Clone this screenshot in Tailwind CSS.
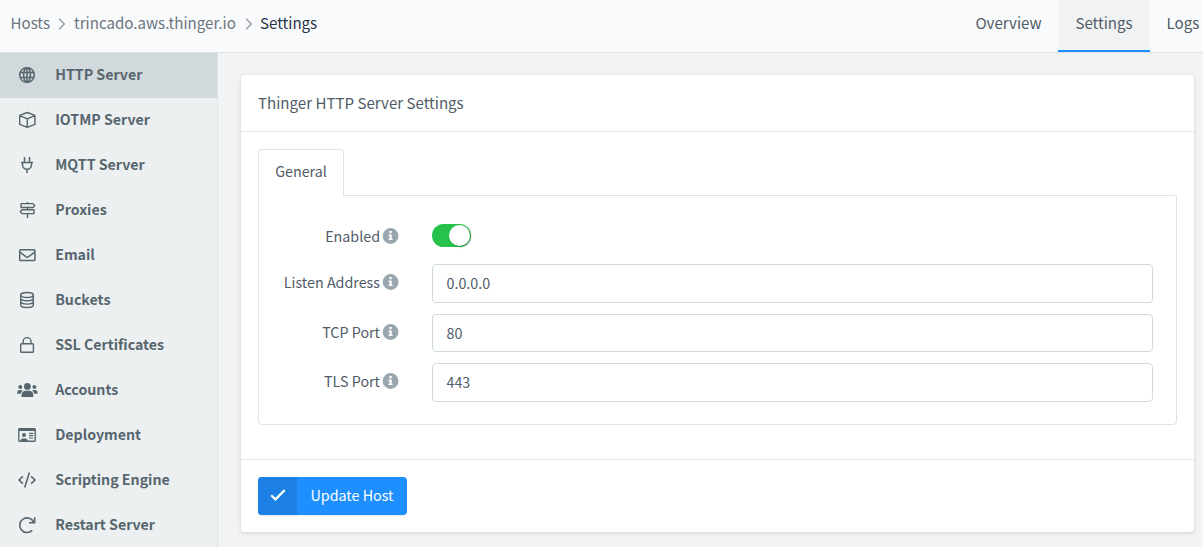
<!DOCTYPE html>
<html lang="en">
<head>
<meta charset="utf-8">
<title>Host Settings</title>
<script src="https://cdn.jsdelivr.net/npm/@tailwindcss/browser@4"></script>
</head>
<body class="flex h-[547px] w-[1203px] flex-col overflow-hidden bg-[#f2f3f5] font-['Noto_Sans_CJK_SC','Noto_Sans',sans-serif] text-[14.3px] leading-6 text-[#4f5b67]">
<header class="flex h-[53px] shrink-0 items-stretch justify-between border-b border-[#dfe3e6] bg-[#f9fafc] text-[15.1px]">
  <nav class="flex items-center pb-[8px] pl-[10.5px] whitespace-nowrap text-[#6c757d]">
    <span class="w-[39.5px]">Hosts</span>
    <svg class="mt-[3px] mr-[8px] ml-[8px] h-[12px] w-[8px] text-[#9da2a8]" viewBox="0 0 8 12" fill="none" stroke="currentColor" stroke-width="1.5"><path d="M1 .8 6.3 6 1 11.2"/></svg>
    <span class="w-[162px]">trincado.aws.thinger.io</span>
    <svg class="mt-[3px] mr-[7px] ml-[9px] h-[12px] w-[8px] text-[#9da2a8]" viewBox="0 0 8 12" fill="none" stroke="currentColor" stroke-width="1.5"><path d="M1 .8 6.3 6 1 11.2"/></svg>
    <span class="text-[#273246]">Settings</span>
  </nav>
  <nav class="flex w-[245px] shrink-0 whitespace-nowrap">
    <span class="flex w-[100px] items-center justify-center pb-[8px] pl-px">Overview</span>
    <span class="flex h-[52px] w-[92px] items-center justify-center border-b-2 border-[#1e8eff] bg-[#f0f2f4] pb-[6px]">Settings</span>
    <span class="flex items-center pb-[8px] pl-[16.5px]">Logs</span>
  </nav>
</header>
<div class="flex min-h-0 flex-1">
  <aside class="w-[218px] shrink-0 border-r border-[#dde2e5] bg-[#ecf0f1] text-[14.2px] font-bold text-[#57666e]">
    <div class="flex h-[45px] items-center bg-[#d2d9dc] pb-px pl-[17px]">
      <svg class="mr-[17px] h-5 w-5" viewBox="0 0 20 20" fill="none" stroke="currentColor" stroke-width="1.5"><circle cx="10" cy="10" r="7.3"/><ellipse cx="10" cy="10" rx="3.4" ry="7.3"/><path d="M3 7.5h14M3 12.5h14M10 2.7v14.6"/></svg>
      <span class="ml-[1.2px] pb-[2px]">HTTP Server</span>
    </div>
    <div class="flex h-[45px] items-center pb-px pl-[17px]">
      <svg class="mr-[17px] h-5 w-5" viewBox="0 0 20 20" fill="none" stroke="currentColor" stroke-width="1.4" stroke-linejoin="round"><path d="m10.300 2.500 7.600 2.900v8.900l-7.600 3-7.600-3V5.400zM2.900 5.600l7.400 3.300 7.400-3.300M10.300 8.900v8.200"/></svg>
      <span class="ml-[1.2px] pb-[2px]">IOTMP Server</span>
    </div>
    <div class="flex h-[45px] items-center pb-px pl-[17px]">
      <svg class="mr-[17px] h-5 w-5" viewBox="0 0 20 20" fill="none" stroke="currentColor" stroke-width="1.5"><path d="M7.500 2v5M12.500 2v5M4 7.500h12M5.500 7.500v2.300a4.500 4.500 0 0 0 9 0V7.500M10 14.300v3.700"/></svg>
      <span class="ml-[1.2px] pb-[2px]">MQTT Server</span>
    </div>
    <div class="flex h-[45px] items-center pb-px pl-[17px]">
      <svg class="mr-[17px] h-5 w-5" viewBox="0 0 20 20" fill="none" stroke="currentColor" stroke-width="1.4" stroke-linejoin="round"><path d="M10.500 2v1.500M10.500 7.500v2.200M10.500 13.600v4.400M4 3.600h12l1.700 2-1.700 1.900H4zM17 9.700H5l-1.700 2L5 13.600h12z"/></svg>
      <span class="ml-[1.2px] pb-[2px]">Proxies</span>
    </div>
    <div class="flex h-[45px] items-center pb-px pl-[17px]">
      <svg class="mr-[17px] h-5 w-5" viewBox="0 0 20 20" fill="none" stroke="currentColor" stroke-width="1.5" stroke-linejoin="round"><rect x="2.700" y="4.700" width="15.200" height="10.800" rx=".8"/><path d="m3 7.200 5.900 4.500q1.400 1 2.800 0l5.900-4.500"/></svg>
      <span class="ml-[1.2px] pb-[2px]">Email</span>
    </div>
    <div class="flex h-[45px] items-center pb-px pl-[17px]">
      <svg class="mr-[17px] h-5 w-5" viewBox="0 0 20 20" fill="none" stroke="currentColor" stroke-width="1.400"><ellipse cx="10" cy="5" rx="6.300" ry="2.500"/><path d="M3.700 5v10c0 3.300 12.600 3.300 12.600 0V5M3.700 8.200c0 3.300 12.600 3.300 12.600 0M3.700 11.600c0 3.300 12.600 3.300 12.600 0"/></svg>
      <span class="ml-[1.2px] pb-[2px]">Buckets</span>
    </div>
    <div class="flex h-[45px] items-center pb-px pl-[17px]">
      <svg class="mr-[17px] h-5 w-5" viewBox="0 0 20 20" fill="none" stroke="currentColor" stroke-width="1.400"><rect x="3.700" y="8.700" width="12.700" height="8.600" rx=".8"/><path d="M6.200 8.700V6.500a3.900 3.900 0 0 1 7.800 0v2.200"/></svg>
      <span class="ml-[1.2px] pb-[2px]">SSL Certificates</span>
    </div>
    <div class="flex h-[45px] items-center pb-px pl-[17px]">
      <svg class="mr-[17px] h-5 w-5 overflow-visible" viewBox="0 0 20 20" fill="currentColor"><circle cx="10.400" cy="6.400" r="3.400"/><circle cx="3.300" cy="6.900" r="2"/><circle cx="17.400" cy="6.900" r="2"/><path d="M4.500 17v-2a4.200 4.200 0 0 1 4.200-4.200h3.400a4.200 4.200 0 0 1 4.200 4.200v2zM.2 13.800v-1.300a2.500 2.500 0 0 1 2.500-2.600h1.600l1.400.7a5.200 5.200 0 0 0-2 3.200zM20.500 13.800v-1.300a2.500 2.500 0 0 0-2.500-2.600h-1.500l-1.400.7a5.200 5.200 0 0 1 2 3.200z"/></svg>
      <span class="ml-[1.2px] pb-[2px]">Accounts</span>
    </div>
    <div class="flex h-[45px] items-center pb-px pl-[17px]">
      <svg class="mr-[17px] h-5 w-5" viewBox="0 0 20 20" fill="currentColor"><path fill-rule="evenodd" d="M2.500 3h15a1.400 1.400 0 0 1 1.400 1.400v11.200a1.400 1.400 0 0 1-1.400 1.400h-15a1.400 1.400 0 0 1-1.400-1.400V4.400A1.400 1.400 0 0 1 2.500 3zM2.400 6v9.600h1.200q.2-2.200 2-2.200h3q1.800 0 2 2.200h6.900V6z"/><circle cx="7" cy="10" r="2"/><path d="M12 7.700h4.200v1.200H12zM12 10h4.200v1.200H12zM12 12.400h4.200v1.200H12z"/></svg>
      <span class="ml-[1.2px] pb-[2px]">Deployment</span>
    </div>
    <div class="flex h-[45px] items-center pb-px pl-[17px]">
      <svg class="mr-[17px] h-5 w-5" viewBox="0 0 20 20" fill="none" stroke="currentColor" stroke-width="1.600"><path d="M5.900 6.300 2 10l3.900 3.700M14.100 6.300 18 10l-3.900 3.700M12.400 2.400 7.700 17.600"/></svg>
      <span class="ml-[1.2px] pb-[2px]">Scripting Engine</span>
    </div>
    <div class="flex h-[45px] items-center pb-px pl-[17px]">
      <svg class="mr-[17px] h-5 w-5" viewBox="0 0 20 20" fill="none" stroke="currentColor" stroke-width="1.600"><path d="M15.200 15.400A7.300 7.300 0 1 1 16.800 7.500M17.600 2.200v5.600h-5.600"/></svg>
      <span class="ml-[1.2px] pb-[2px]">Restart Server</span>
    </div>
  </aside>
  <main class="flex-1 pt-[22px] pl-[23px]">
    <section class="h-[457px] w-[953px] rounded-[4px] bg-white shadow-[0_1px_4px_rgba(0,0,0,0.14)]">
      <h1 class="flex h-[57px] items-center border-b border-[#e2e6e7] pb-[2px] pl-[17px] text-[15.1px]">Thinger HTTP Server Settings</h1>
      <div class="h-[327px] px-[17px] pt-[17px]">
        <div class="relative z-10 flex h-[47px] w-[86px] items-center justify-center rounded-t-[4px] border border-b-0 border-[#dde4e6] bg-white pb-[4px]">General</div>
        <div class="-mt-px h-[230px] rounded-b-[4px] rounded-tr-[2px] border border-[#dde4e6] pt-[27px] pr-[23px]">
          <div class="flex h-[41px] items-start">
            <label class="mt-px flex w-[140px] items-center justify-end gap-[3px] whitespace-nowrap"><span>Enabled</span><svg class="h-4 w-4 shrink-0 overflow-visible" viewBox="0 0 16 16"><circle cx="7.600" cy="8" r="7.900" fill="#98a6ad"/><path fill="#fff" d="M6.300 3h2.400v2.300H6.300zM5.500 6.500h3.200v4.200h1V12H5.500v-1.300h1V7.800h-1z"/></svg></label>
            <div class="mt-px ml-[33px] flex h-[23px] w-[39px] justify-end rounded-full bg-[#27c24c] p-px"><div class="h-[21px] w-[21px] rounded-full bg-white shadow-[1px_1px_2px_rgba(0,0,0,0.3)]"></div></div>
          </div>
          <div class="flex h-[50px] items-start">
            <label class="mt-[6px] flex w-[140px] items-center justify-end gap-[3px] whitespace-nowrap"><span>Listen Address</span><svg class="h-4 w-4 shrink-0 overflow-visible" viewBox="0 0 16 16"><circle cx="7.600" cy="8" r="7.900" fill="#98a6ad"/><path fill="#fff" d="M6.300 3h2.400v2.300H6.300zM5.500 6.500h3.200v4.200h1V12H5.500v-1.300h1V7.800h-1z"/></svg></label>
            <div class="ml-[33px] flex h-[39px] flex-1 items-center rounded-[4px] border border-[#cfdadd] pl-[13.500px]"><span class="pb-px">0.0.0.0</span></div>
          </div>
          <div class="flex h-[49px] items-start">
            <label class="mt-[6px] flex w-[140px] items-center justify-end gap-[3px] whitespace-nowrap"><span>TCP Port</span><svg class="h-4 w-4 shrink-0 overflow-visible" viewBox="0 0 16 16"><circle cx="7.600" cy="8" r="7.900" fill="#98a6ad"/><path fill="#fff" d="M6.300 3h2.400v2.300H6.300zM5.500 6.500h3.200v4.200h1V12H5.500v-1.300h1V7.800h-1z"/></svg></label>
            <div class="ml-[33px] flex h-[38px] flex-1 items-center rounded-[4px] border border-[#cfdadd] pl-[13.500px]">80</div>
          </div>
          <div class="flex items-start">
            <label class="mt-[6px] flex w-[140px] items-center justify-end gap-[3px] whitespace-nowrap"><span>TLS Port</span><svg class="h-4 w-4 shrink-0 overflow-visible" viewBox="0 0 16 16"><circle cx="7.600" cy="8" r="7.900" fill="#98a6ad"/><path fill="#fff" d="M6.300 3h2.400v2.300H6.300zM5.500 6.500h3.200v4.200h1V12H5.500v-1.300h1V7.800h-1z"/></svg></label>
            <div class="ml-[33px] flex h-[39px] flex-1 items-center rounded-[4px] border border-[#cfdadd] pl-[13.500px]"><span class="pb-px">443</span></div>
          </div>
        </div>
      </div>
      <footer class="border-t border-[#e2e6e7] px-[17px] pt-[17px]">
        <button class="flex h-[38px] w-[149px] overflow-hidden rounded-[4px] bg-[#1e8fff] text-white shadow-[0_1px_1px_rgba(90,90,90,0.1)]">
          <span class="flex h-full w-[39px] items-center justify-center bg-[#1c80e5]"><svg class="-mt-[2px] h-4 w-4" viewBox="0 0 16 16" fill="none" stroke="currentColor" stroke-width="2.200"><path d="m1.200 8.300 4.200 4.100 9.300-9.300"/></svg></span>
          <span class="flex h-full flex-1 items-center justify-center pb-[2px] whitespace-nowrap">Update Host</span>
        </button>
      </footer>
    </section>
  </main>
</div>
</body>
</html>
